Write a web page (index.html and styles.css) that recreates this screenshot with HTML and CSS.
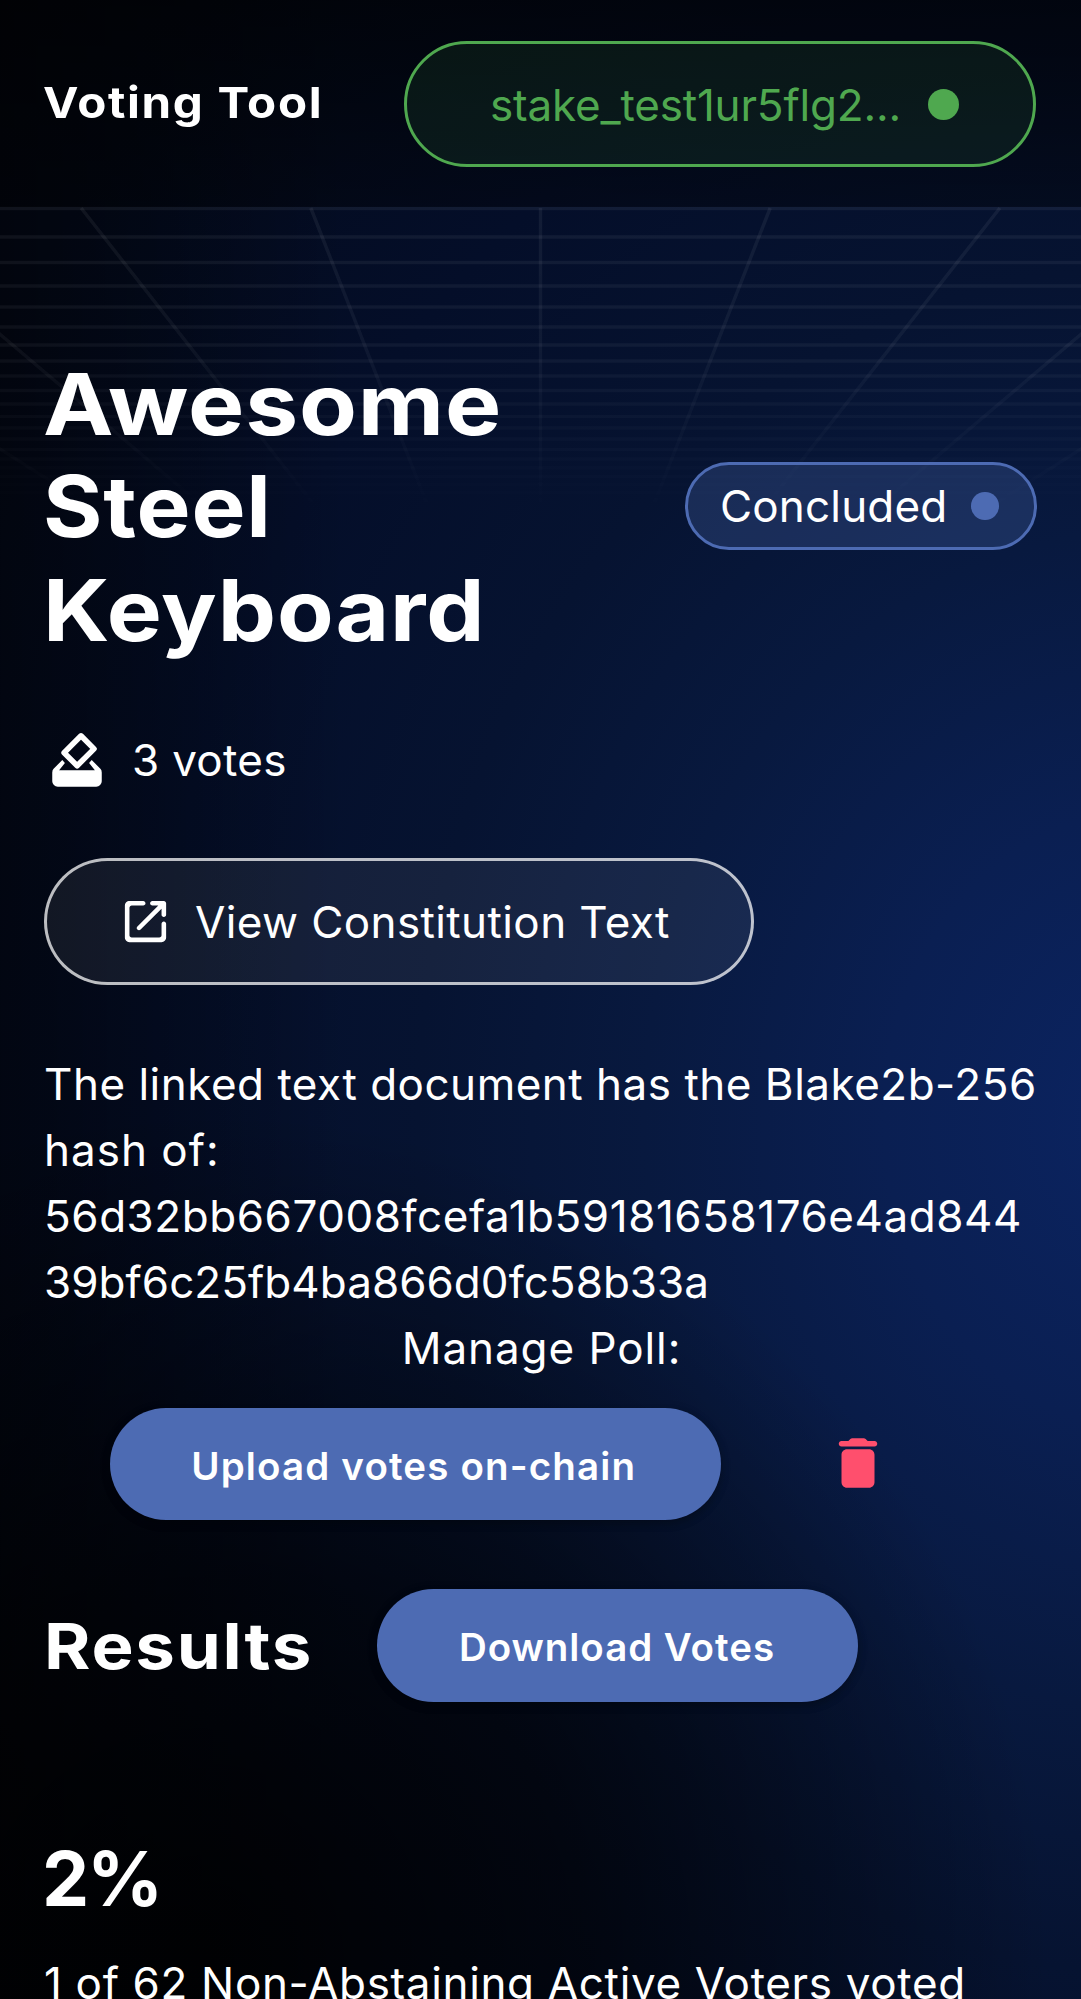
FILE: index.html
```html
<!DOCTYPE html>
<html lang="en">
<head>
<meta charset="utf-8">
<title>Voting Tool</title>
<link rel="stylesheet" href="styles.css">
</head>
<body>
<div class="page">
  <svg class="grid" viewBox="0 0 1081 320" fill="none" aria-hidden="true">
    <defs>
      <linearGradient id="fade" x1="0" y1="0" x2="0" y2="1">
        <stop offset="0" stop-color="#fff"/>
        <stop offset=".45" stop-color="#fff" stop-opacity=".8"/>
        <stop offset="1" stop-color="#fff" stop-opacity="0"/>
      </linearGradient>
      <mask id="m" maskUnits="userSpaceOnUse" x="0" y="0" width="1081" height="320"><rect width="1081" height="310" fill="url(#fade)"/></mask>
    </defs>
    <g mask="url(#m)">
      <path class="rows" d="M0 2.5H1081M0 31H1081M0 56.500H1081M0 80H1081M0 101H1081M0 121H1081M0 139H1081M0 155H1081M0 170H1081M0 184.500H1081M0 198H1081M0 210.500H1081M0 222H1081M0 233H1081M0 243.500H1081M0 253H1081M0 262H1081M0 270.500H1081M0 278.500H1081M0 286.500H1081M0 294H1081"/>
      <path class="cols" d="M540.500 2V320M310.800 2L435.600 320M770.200 2L645.400 320M81.100 2L330.700 320M999.900 2L750.300 320M-148.600 2L225.800 320M1229.600 2L855.200 320M-378.300 2L120.900 320M1459.300 2L960.100 320M-608 2L16 320M1689 2L1065 320"/>
    </g>
  </svg>

  <header class="header">
    <div class="brand">Voting Tool</div>
    <button class="wallet"><span class="wallet-id">stake_test1ur5flg2...</span><i class="dot dot-green"></i></button>
  </header>

  <main class="main">
    <section class="title-row">
      <h1 class="title"><span class="t1">Awesome</span><span class="t2">Steel</span><span class="t3">Keyboard</span></h1>
      <div class="status"><span>Concluded</span><i class="dot dot-blue"></i></div>
    </section>

    <div class="votes">
      <svg class="icon" viewBox="0 0 24 24">
        <path d="M13.460 3.200 18.200 7.950 12.050 14.100 7.300 9.360Z" fill="none" stroke="currentColor" stroke-width="2" stroke-linejoin="round"/>
        <path d="M6.650 12 7.600 13.100 5.500 15.700H18.500L16.400 13.100 17.350 12 20.500 15.200Q21 15.700 21 16.500V19.700a2 2 0 0 1-2 2H5a2 2 0 0 1-2-2V16.500Q3 15.700 3.500 15.200Z" fill="currentColor"/>
      </svg>
      <span>3 votes</span>
    </div>

    <button class="view">
      <svg class="icon-sm" viewBox="0 0 24 24" fill="currentColor"><path d="M18 19H6c-.55 0-1-.45-1-1V6c0-.55.45-1 1-1h5c.55 0 1-.45 1-1s-.45-1-1-1H5c-1.110 0-2 .9-2 2v14c0 1.100.9 2 2 2h14c1.100 0 2-.9 2-2v-6c0-.55-.45-1-1-1s-1 .45-1 1v5c0 .55-.45 1-1 1zM14 4c0 .55.45 1 1 1h2.590l-9.130 9.130c-.39.39-.39 1.020 0 1.410.39.39 1.020.39 1.410 0L19 6.410V9c0 .55.45 1 1 1s1-.45 1-1V4c0-.55-.45-1-1-1h-5c-.55 0-1 .45-1 1z"/></svg>
      <span>View Constitution Text</span>
    </button>

    <p class="hash"><span class="l1">The linked text document has the Blake2b-256</span><br><span class="l2">hash of:</span><br><span class="l3">56d32bb667008fcefa1b59181658176e4ad844</span><br><span class="l4">39bf6c25fb4ba866d0fc58b33a</span></p>

    <div class="manage-label">Manage Poll:</div>
    <div class="manage">
      <button class="btn btn-upload">Upload votes on-chain</button>
      <button class="trash" aria-label="Delete poll">
        <svg class="icon" viewBox="0 0 24 24" fill="currentColor"><path d="M6 19c0 1.100.9 2 2 2h8c1.100 0 2-.9 2-2V9c0-1.100-.9-2-2-2H8c-1.100 0-2 .9-2 2v10zM18 4h-2.500l-.71-.71c-.18-.18-.44-.29-.7-.29H9.910c-.26 0-.52.11-.7.29L8.500 4H6c-.55 0-1 .45-1 1s.45 1 1 1h12c.55 0 1-.45 1-1s-.45-1-1-1z"/></svg>
      </button>
    </div>

    <div class="results">
      <h2 class="results-title"><span>Results</span></h2>
      <button class="btn btn-download">Download Votes</button>
    </div>

    <div class="percent">2%</div>
    <div class="turnout">1 of 62 Non-Abstaining Active Voters voted</div>
  </main>
</div>
</body>
</html>
```
FILE: styles.css
```css
* { box-sizing: border-box; }

body {
  margin: 0;
  background: #000;
  color: #fff;
  font: 400 44px/66px Inter, sans-serif;
}

button { font: inherit; color: inherit; background: none; border: 0; padding: 0; margin: 0; }
h1, h2, p { margin: 0; }
svg { display: block; flex: none; }

.page {
  position: relative;
  height: 1999px;
  overflow: hidden;
  background:
    radial-gradient(850px 850px at 200px 1960px, rgba(0, 0, 0, .9), rgba(0, 0, 0, .65) 45%, rgba(0, 0, 0, 0)),
    linear-gradient(90deg, rgba(0, 0, 0, .5), rgba(0, 0, 0, 0) 32%),
    radial-gradient(1330px 1550px at 1150px 1120px, #0b2462 0, #0a1f52 20%, #08193f 38%, #061331 55%, #040e29 75%, #030a1c 100%);
}

.grid { position: absolute; top: 206px; left: 0; width: 1081px; height: 320px; }
.rows { stroke: rgba(255, 255, 255, .06); stroke-width: 3.500; }
.cols { stroke: rgba(255, 255, 255, .06); stroke-width: 3.500; }

.header {
  position: relative;
  display: flex;
  align-items: center;
  justify-content: space-between;
  height: 207px;
  padding: 0 45px 0 43px;
  background: linear-gradient(rgba(0, 0, 0, .65), rgba(0, 0, 0, .35));
}
.brand {
  font-size: 43px;
  font-weight: 700;
  letter-spacing: 1.500px;
  padding-bottom: 4px;
  transform: scaleX(1.105);
  transform-origin: left;
}

.wallet {
  display: flex;
  align-items: center;
  justify-content: center;
  width: 632px;
  height: 126px;
  margin-top: 1px;
  padding-left: 9px;
  gap: 27px;
  color: #4fa84f;
  border: 3px solid #4fa84f;
  border-radius: 64px;
  background: rgba(76, 175, 80, .1);
}
.wallet-id { letter-spacing: -.18px; padding-top: 1px; }

.dot { display: block; flex: none; border-radius: 50%; }
.dot-green { width: 31px; height: 31px; background: #4fa84f; }
.dot-blue { width: 27.500px; height: 27.500px; background: #4d6bb3; }

.main { position: relative; padding: 145.500px 44px 0; }

.title-row { display: flex; align-items: center; justify-content: space-between; height: 308px; }
.title { font-size: 85px; line-height: 103px; font-weight: 700; margin: 1px 0 0 -1px; }
.title span { display: block; transform-origin: left; width: max-content; letter-spacing: .8px; }
.t1 { transform: scaleX(1.112); }
.title .t2 { transform: scaleX(1.068); margin: -1px 0 1px; }
.t3 { transform: scaleX(1.088); }

.status {
  display: flex;
  align-items: center;
  width: 352px;
  height: 88px;
  margin-top: -1px;
  padding-left: 32px;
  gap: 24px;
  border: 3px solid #4d6bb3;
  border-radius: 44px;
  background: rgba(77, 107, 179, .28);
  letter-spacing: .17px;
}

.icon { width: 66px; height: 66px; }
.icon-sm { width: 55px; height: 55px; }

.votes { display: flex; align-items: center; gap: 22px; height: 66px; margin-top: 66.500px; letter-spacing: .3px; }

.view {
  display: flex;
  align-items: center;
  width: 709.500px;
  height: 126.500px;
  margin-top: 65px;
  padding-left: 71px;
  gap: 22px;
  border: 3px solid rgba(255, 255, 255, .72);
  border-radius: 64px;
  background: rgba(255, 255, 255, .065);
  letter-spacing: .39px;
}
.view span { padding-top: 2px; }

.hash { margin-top: 66px; white-space: nowrap; }
.l1 { letter-spacing: .5px; }
.l2 { letter-spacing: 1px; }
.l3 { letter-spacing: .55px; }
.l4 { letter-spacing: .04px; }

.manage-label { text-align: center; letter-spacing: .93px; padding-left: 2px; }
.manage { display: flex; align-items: center; margin: 27px 0 0 66px; gap: 82px; }
.trash { display: flex; align-items: center; justify-content: center; width: 110px; height: 110px; padding-bottom: 2px; color: #ff4f6d; }

.btn {
  height: 112.750px;
  border-radius: 57px;
  background: #4d6bb3;
  padding-top: 3px;
  font-size: 38.500px;
  font-weight: 600;
  letter-spacing: 1.150px;
  box-shadow: 0 4px 8px rgba(0, 0, 0, .2), 0 2px 12px rgba(0, 0, 0, .12);
}
.btn-upload { width: 610.500px; padding: 4px 3px 0 0; }
.btn-download { width: 481px; letter-spacing: .96px; }

.results { display: flex; align-items: center; height: 113px; margin-top: 69px; }
.results-title { width: 332.500px; font-size: 63.600px; font-weight: 700; letter-spacing: 1.600px; }
.results-title span { display: block; width: max-content; transform: scaleX(1.113); transform-origin: left; }

.percent { margin-top: 131px; margin-left: -2px; font-size: 75px; line-height: 92px; font-weight: 700; letter-spacing: -2.200px; }
.turnout { margin-top: 25px; white-space: nowrap; letter-spacing: .66px; }
```
